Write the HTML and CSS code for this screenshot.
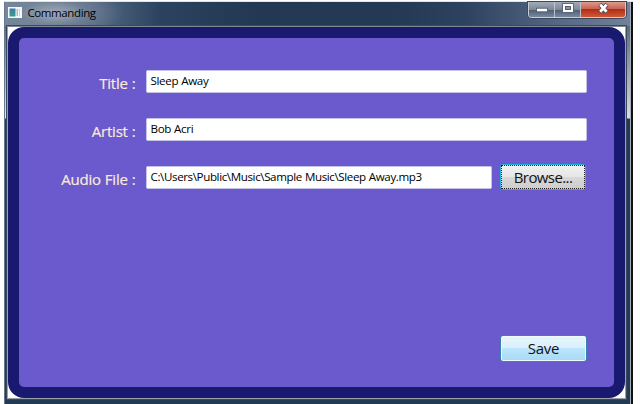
FILE: index.html
```
<!DOCTYPE html>
<html lang="en">
<head>
<meta charset="utf-8">
<title>Commanding</title>
<link rel="stylesheet" href="styles.css">
</head>
<body>
<div class="window">
  <header class="titlebar">
    <svg class="app-icon" width="14" height="11" viewBox="0 0 14 11">
      <defs><linearGradient id="ic" x1="0" y1="0" x2="0" y2="1"><stop offset="0" stop-color="#3c78b4"/><stop offset="1" stop-color="#35a287"/></linearGradient></defs>
      <rect width="14" height="11" fill="#f4f6f5"/>
      <rect x="1.5" y="1.5" width="6" height="8" fill="url(#ic)"/>
      <rect x="8.5" y="2" width="1.5" height="7" fill="#a9bfc4"/>
      <rect x="11" y="2" width="1" height="7" fill="#ccd6d8"/>
    </svg>
    <span class="caption">Commanding</span>
    <div class="controls">
      <span class="ctl min"><svg width="25" height="15" viewBox="0 0 25 15"><rect x="7.5" y="6.2" width="11" height="3.6" fill="#fff" stroke="#4a5364" stroke-width=".8"/></svg></span>
      <span class="ctl max"><svg width="25" height="15" viewBox="0 0 25 15"><rect x="7.6" y="1.6" width="10.8" height="8.8" fill="#fff" stroke="#4a5364" stroke-width=".8"/><rect x="10.5" y="4.5" width="5" height="3" fill="#8b95a4" stroke="#4a5364" stroke-width=".9"/></svg></span>
      <span class="ctl close"><svg width="45" height="15" viewBox="0 0 45 15"><path d="M18.8 2.2l7.2 8M26 2.2l-7.2 8" stroke="#5a4450" stroke-width="4.4"/><path d="M19.2 2.6l6.4 7.2M25.6 2.6l-6.4 7.2" stroke="#fff" stroke-width="2.8"/></svg></span>
    </div>
  </header>
  <div class="client">
    <main class="panel">
      <div class="row"><label class="label">Title :</label><div class="field"><span>Sleep Away</span></div></div>
      <div class="row"><label class="label">Artist :</label><div class="field"><span>Bob Acri</span></div></div>
      <div class="row"><label class="label">Audio File :</label><div class="field"><span class="path">C:\Users\Public\Music\Sample Music\Sleep Away.mp3</span></div><button class="browse"><span>Browse...</span></button></div>
      <button class="save">Save</button>
    </main>
  </div>
</div>
</body>
</html>
```
FILE: styles.css
```
* { box-sizing: border-box; }
body { margin: 0; width: 640px; height: 404px; overflow: hidden; background: #fff; font-family: "Open Sans", "Noto Sans", sans-serif; }
.window {
  width: 629px; height: 403px; margin: 1px 0 0 4px;
  display: flex; flex-direction: column;
  padding: 0 7px 5px 3px;
  border-top: 1px solid #dfe5ee;
  background:
    linear-gradient(90deg, #68788c, #68788c) 0 0 / 1px 100% no-repeat,
    linear-gradient(#111, #111) 100% 0 / 2px 100% no-repeat,
    linear-gradient(#a5adb7, #a5adb7) 626px 0 / 1px 100% no-repeat,
    linear-gradient(#6d7f98, #5c6a80 25px, #dcdfe2 116px, #223a54 117px) 100% 0 / 8px 100% no-repeat,
    linear-gradient(#8795a8, #5c6a80 25px, #e6e9ea 116px, #223a54 117px) 0 0 / 4px 100% no-repeat,
    linear-gradient(#223a54, #223a54);
}
.titlebar {
  height: 24px; flex: none; margin: 0 -4px 0 -2px;
  display: flex; align-items: flex-start;
  background:
    radial-gradient(ellipse 68px 25px at 50px 11px, rgba(170,180,190,.85), rgba(120,135,155,.6) 50%, transparent),
    linear-gradient(90deg, #76869b 0, #536983 90px, #2c435f 155px, #223853 250px, #233954 390px, #2d425e 460px, #536683 550px, #71819a 623px);
}
.app-icon { margin: 5px 0 0 3px; }
.caption { margin: 3px 0 0 5.5px; font-size: 11.5px; line-height: 16px; letter-spacing: -.4px; color: #000; }
.controls {
  display: flex; width: 98px; height: 16px; margin-left: auto; margin-right: 4px;
  border: 1px solid #c9ced6; border-top: 0; border-radius: 0 0 4px 4px; overflow: hidden;
  box-shadow: 0 0 0 1px #3d485b;
}
.ctl { height: 15px; background: linear-gradient(#a2abb7, #7d899a 50%, #4e5d74 52%, #78889f); }
.ctl svg { display: block; }
.min { width: 26px; border-right: 1px solid #bdc3cd; }
.max { width: 26px; border-right: 1px solid #bdc3cd; }
.close { width: 44px; background: linear-gradient(#db9b8d, #c96453 45%, #b32d16 50%, #cf5836); }
.client {
  flex: 1; min-height: 0; border: 1px solid #9aa0a8; border-top-color: #7f8792; background: #fff;
  box-shadow: 0 0 0 1px #394a5e;
}
.panel {
  height: 100%; border: 11px solid #191970; border-radius: 16px;
  background: #6a5acd; padding: 32px 27px 25px 27px;
  display: flex; flex-direction: column;
}
.row { display: flex; align-items: flex-start; height: 23px; margin-bottom: 25px; }
.label { width: 89.5px; margin-right: 10px; text-align: right; color: #faebd7; font-size: 15px; line-height: 20px; margin-top: 3px; white-space: nowrap; letter-spacing: -.2px; word-spacing: .3px; -webkit-text-stroke: .2px #faebd7; }
.field { flex: 1; height: 23px; background: #fff; border: 1px solid #c4c2e6; border-radius: 1.5px; padding: 1px 4px; font-size: 11.6px; line-height: 17px; color: #000; white-space: nowrap; letter-spacing: -.35px; word-spacing: .4px; }
.path { letter-spacing: -.39px; }
button { font-family: inherit; font-size: 15px; color: #111; padding: 0; text-align: center; }
.browse {
  flex: none; width: 86px; height: 26px; margin: -2px 1px 0 8px;
  border: 1px solid #20b5dd; border-radius: 3px; background: linear-gradient(#f1f1f1, #e6e6e6 49%, #d8d8d8 50%, #cdcdcd);
}
.row:has(.browse) .field { margin-right: 0; }
.browse span { display: block; height: 24px; border: 1px dotted #222; line-height: 23px; letter-spacing: -.6px; }
.save {
  width: 87px; height: 27px; margin: auto 0 0; align-self: flex-end;
  border: 1px solid #3d7fb1; border-radius: 3px; box-shadow: inset 0 0 0 1px #effaff;
  background: linear-gradient(#e8f5fc, #d9f0fc 49%, #bce5fc 50%, #a7d9f5); line-height: 25px; letter-spacing: -.3px;
}
```
